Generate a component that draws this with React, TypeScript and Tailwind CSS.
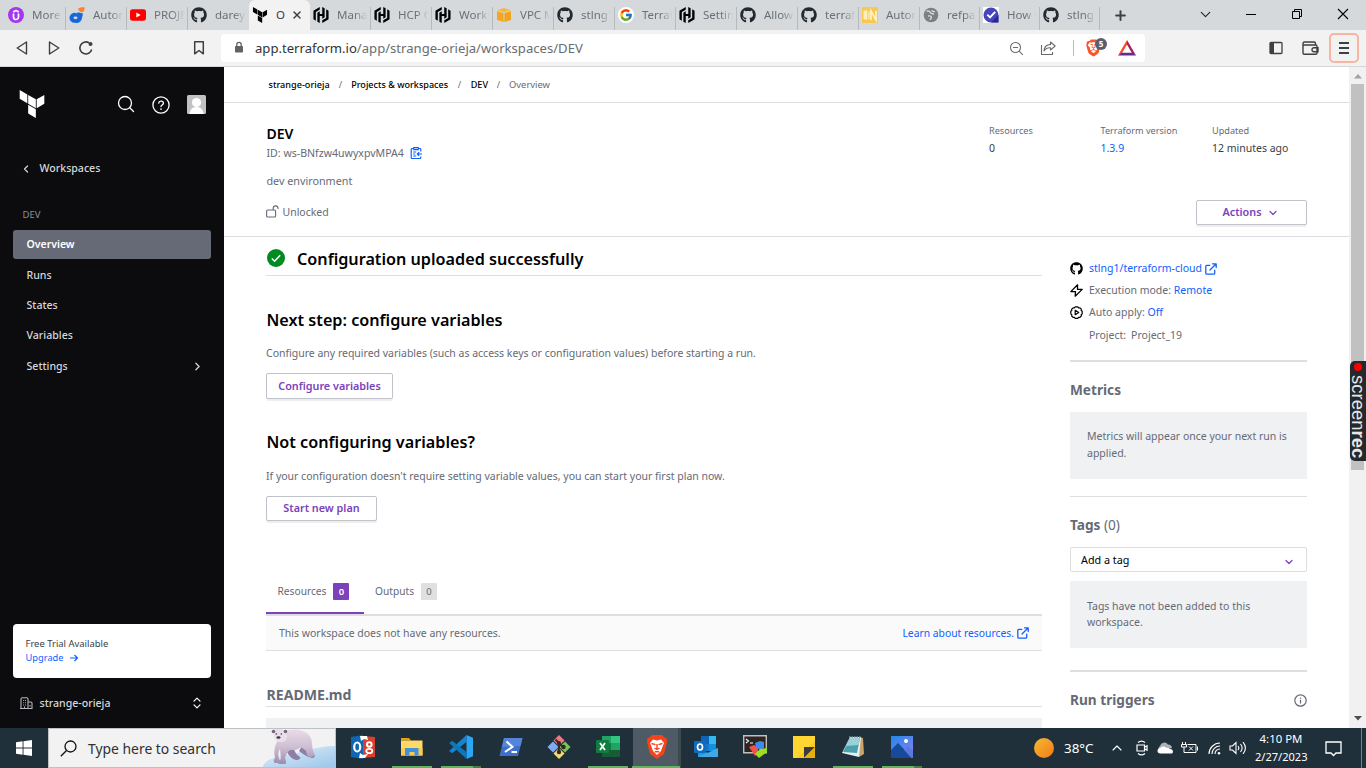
import type { ReactNode } from "react";
import { FaGithub } from "react-icons/fa";
import { SiBrave, SiHashicorp } from "react-icons/si";
import { FcGoogle } from "react-icons/fc";
import { ChevronDown, ChevronLeft, ChevronRight, ChevronUp, Plus, X } from "lucide-react";

const TERRAFORM =
  "M1.44 0v7.575l6.561 3.79V3.787zm21.12 4.227l-6.561 3.791v7.574l6.56-3.787zM8.72 4.23v7.575l6.561 3.787V8.018zm0 8.405v7.575L15.28 24v-7.578z";

function Terraform({ className }: { className: string }) {
  return (
    <svg viewBox="0 0 24 24" className={className} fill="currentColor">
      <path d={TERRAFORM} />
    </svg>
  );
}

/* ---------- Favicons ---------- */

function Udemy() {
  return (
    <svg viewBox="0 0 16 16" className="size-4">
      <circle cx="8" cy="8" r="8" fill="#a435f0" />
      <path d="M5.200 5 8 3.400 10.800 5M5.500 6.500V10a2.500 2.500 0 0 0 5 0V6.500" fill="none" stroke="#fff" strokeWidth="1.700" />
    </svg>
  );
}

function Dribble() {
  return (
    <svg viewBox="0 0 16 16" className="size-4">
      <path d="M8.500 5.200 14 6.500 12.800 12a6 6 0 0 1-6.800 3.800A5 5 0 1 1 8 6.500z" fill="#1868db" />
      <ellipse cx="6.500" cy="10.800" rx="2" ry="1.400" fill="#d5d9dc" />
      <path d="M9.200 1.500C11 .2 15.400 0 15.600.6c.3 1-.4 4.200-2.200 4.700-1.500.4-5-2.600-4.200-3.800z" fill="#ff8228" />
    </svg>
  );
}

function YouTube() {
  return (
    <svg viewBox="0 0 16 16" className="size-4">
      <rect x="0" y="2.300" width="16" height="11.400" rx="2.600" fill="#f00" />
      <path d="M6.300 5.500v5L10.700 8z" fill="#fff" />
    </svg>
  );
}

function AwsBox() {
  return (
    <svg viewBox="0 0 16 16" className="size-4">
      <path d="M8 1 15 3.200 8 5.300 1 3.200z" fill="#f6b73c" />
      <path d="M1 4.200 7.600 6v9L1 13z" fill="#f5a623" />
      <path d="M15 4.200 8.400 6v9l6.600-2z" fill="#f0a41c" />
    </svg>
  );
}

function NoteIcon() {
  return (
    <svg viewBox="0 0 16 16" className="size-4">
      <rect width="16" height="16" fill="#f9c94f" />
      <path d="M1.500 4 5 3v10l-3.500-1z" fill="#fdeebc" />
      <path d="M5.500 4.500 8 4v8.500l-2.500-.4z" fill="#fbe08f" />
      <path d="M9 13V4l5 9V4" fill="none" stroke="#fff7dc" strokeWidth="1.500" />
    </svg>
  );
}

function Globe() {
  return (
    <svg viewBox="0 0 16 16" className="size-4">
      <circle cx="8" cy="8" r="7.300" fill="#7d8083" />
      <path d="M3.500 4.200c2-.4 3.500.2 4 1.500.4 1.200 2 .8 3.500 1.300M5 9c2-.3 3.500.3 3.400 1.500-.1.900-1 1-1.200 2.300M9 3c0 1.300 1.500 1.800 3 1.600" fill="none" stroke="#d5d9dc" strokeWidth="1.400" />
    </svg>
  );
}

function CheckSeal() {
  return (
    <svg viewBox="0 0 16 16" className="size-4">
      <rect width="16" height="16" fill="#fff" />
      <path d="M8 .5a7.500 7.500 0 0 1 7.500 7.500v7.500H8A7.500 7.500 0 0 1 8 .5z" fill="#4644bd" />
      <path d="M15.500 8v7.500H8z" fill="#29278f" />
      <path d="m4.300 7.600 2.700 2.800 5.200-5.600" fill="none" stroke="#fff" strokeWidth="1.900" />
    </svg>
  );
}

const gh = <FaGithub className="size-4 text-[#24292f]" />;
const hc = <SiHashicorp className="size-4 text-black" />;

const tabs: { title: string; icon: ReactNode; active?: boolean; edge?: boolean }[] = [
  { title: "More", icon: <Udemy /> },
  { title: "Autom", icon: <Dribble /> },
  { title: "PROJE", icon: <YouTube /> },
  { title: "darey", icon: gh, edge: true },
  { title: "O", icon: <Terraform className="size-4 text-black" />, active: true },
  { title: "Mana", icon: hc },
  { title: "HCP C", icon: hc },
  { title: "Works", icon: hc },
  { title: "VPC M", icon: <AwsBox /> },
  { title: "stlng1", icon: gh },
  {
    title: "Terraf",
    icon: (
      <span className="flex size-4 items-center justify-center rounded-full bg-white">
        <FcGoogle className="size-[14px]" />
      </span>
    ),
  },
  { title: "Settin", icon: hc },
  { title: "Allow", icon: gh },
  { title: "terraf", icon: gh },
  { title: "Autom", icon: <NoteIcon /> },
  { title: "refpa", icon: <Globe /> },
  { title: "How t", icon: <CheckSeal /> },
  { title: "stlng1", icon: gh },
];

function TabStrip() {
  return (
    <div className="flex h-[30px] bg-[#d5d9dc] pl-[5px]">
      {tabs.map((t, i) => (
        <div
          key={i}
          className={`flex h-full shrink-0 items-center pl-[3px] ${i < 15 ? "w-[61px]" : "w-[60px]"} ${t.active ? "rounded-t-md bg-[#f2f2f2]" : ""}`}
        >
          <span className="flex size-4 shrink-0 items-center">{t.icon}</span>
          {t.active ? (
            <>
              <span className="ml-2 text-[11.500px] text-[#3c4043]">O</span>
              <X className="ml-[6px] size-3 text-[#3c4043]" strokeWidth={3} />
            </>
          ) : (
            <span className="ml-2 flex-1 overflow-hidden text-[11.500px] whitespace-nowrap text-[#6b7075] [mask-image:linear-gradient(to_right,black_55%,transparent_92%)]">
              {t.title}
            </span>
          )}
          {!t.active && !t.edge && <span className="mt-[7px] h-[23px] w-px shrink-0 bg-[#b7babd]" />}
        </div>
      ))}
      <div className="flex w-[41px] items-center justify-center">
        <Plus className="size-[15px] text-[#3c4043]" strokeWidth={3.200} />
      </div>
      <div className="flex flex-1 items-center justify-end text-black">
        <ChevronDown className="mt-[-2px] mr-[31px] size-[17px] text-[#222]" strokeWidth={1.600} />
        <svg viewBox="0 0 12 12" className="mt-[-2px] mr-[34px] size-3" fill="none" stroke="currentColor">
          <path d="M1 6.500h10" />
        </svg>
        <svg viewBox="0 0 12 12" className="mt-[-2px] mr-[34px] size-3" fill="none" stroke="currentColor">
          <path d="M1.500 3.500h7v7h-7zM3.500 3.500v-2h7v7h-2" />
        </svg>
        <svg viewBox="0 0 12 12" className="mt-[-2px] mr-[17px] size-3" fill="none" stroke="currentColor" strokeWidth="1.100">
          <path d="m1 1 10 10M11 1 1 11" />
        </svg>
      </div>
    </div>
  );
}

function Toolbar() {
  return (
    <div className="flex h-9 items-center bg-[#f2f2f2] text-[#3c4043]">
      <svg viewBox="0 0 12 16" className="ml-4 h-4 w-3" fill="none" stroke="currentColor" strokeWidth="1.400" strokeLinejoin="round">
        <path d="M10.500 2v12L1.200 8z" />
      </svg>
      <svg viewBox="0 0 12 16" className="ml-5 h-4 w-3" fill="none" stroke="currentColor" strokeWidth="1.400" strokeLinejoin="round">
        <path d="M1.500 2v12l9.300-6z" />
      </svg>
      <svg viewBox="0 0 16 16" className="ml-[18px] size-4" fill="none" stroke="currentColor" strokeWidth="1.600">
        <path d="M13.700 9.500A6 6 0 1 1 11 2.800" />
        <circle cx="12.500" cy="4" r="2" fill="currentColor" stroke="none" />
      </svg>
      <svg viewBox="0 0 12 16" className="ml-[99px] h-4 w-3" fill="none" stroke="currentColor" strokeWidth="1.500" strokeLinejoin="round">
        <path d="M1.700 1.800h8.600v12L6 10.500l-4.300 3.300z" />
      </svg>
      <div className="ml-4 flex h-7 w-[924px] items-center rounded bg-white">
        <svg viewBox="0 0 10 13" className="mt-[-1px] ml-[13px] h-[13px] w-[10px]">
          <rect x="1" y="5" width="8" height="6.500" rx=".8" fill="#5f6368" />
          <path d="M2.800 5.500V3.600a2.200 2.200 0 0 1 4.400 0v1.900" fill="none" stroke="#5f6368" strokeWidth="1.300" />
        </svg>
        <div className="mt-[1px] ml-[11px] text-[13.100px] whitespace-nowrap text-[#6a6d70]">
          <span className="text-[#2f3336]">app.terraform.io</span>/app/strange-orieja/workspaces/DEV
        </div>
        <div className="ml-auto flex items-center">
          <svg viewBox="0 0 15 15" className="size-[15px]" fill="none" stroke="#6a6d70" strokeWidth="1.100">
            <circle cx="6.500" cy="6.500" r="5" />
            <path d="m10.200 10.200 3.600 3.600M4 6.500h5" />
          </svg>
          <svg viewBox="0 0 16 16" className="ml-4 size-4" fill="none" stroke="#6a6d70" strokeWidth="1.100" strokeLinejoin="round">
            <path d="M1.500 5v9.500h11V12M10.500 2l4.700 4-4.700 4V7.800C7.500 7.600 5.500 8.600 4 11c.2-3.500 2.500-6.300 6.500-6.600z" />
          </svg>
          <span className="ml-[17px] h-4 w-px bg-[#b9bbbd]" />
          <div className="relative ml-[11px] h-5 w-6">
            <SiBrave className="absolute top-[1px] left-0 h-[18px] w-[17px] text-[#fb542b]" />
            <span className="absolute top-0 left-[10px] flex size-3 items-center justify-center rounded-full bg-[#5b5e6b] text-[8px] font-bold text-white">
              5
            </span>
          </div>
          <svg viewBox="0 0 18 16" className="mr-[9px] ml-[9px] h-4 w-[18px]">
            <path d="M9 0 0 15.500l3.800-2L9 4.600z" fill="#ff4724" />
            <path d="m9 0 9 15.500-3.800-2L9 4.600z" fill="#9e1f63" />
            <path d="M0 15.500h18l-3.800-2.700H3.800z" fill="#662d91" />
          </svg>
        </div>
      </div>
      <svg viewBox="0 0 14 14" className="ml-[124px] size-[14px]">
        <rect x="1" y="1.500" width="12" height="11" rx="1" fill="none" stroke="currentColor" strokeWidth="1.300" />
        <path d="M1 1.500h4v11H1z" fill="currentColor" />
      </svg>
      <svg viewBox="0 0 17 14" className="ml-[19px] h-[14px] w-[17px]" fill="none" stroke="currentColor" strokeWidth="1.400">
        <path d="M2.500 4h11a1.500 1.500 0 0 1 1.500 1.500V12a1.300 1.300 0 0 1-1.300 1.300H2.300A1.300 1.300 0 0 1 1 12V2.500A1.500 1.500 0 0 1 2.500 1H12a1.500 1.500 0 0 1 1.500 1.500V4M1 3c0 .7.700 1 1.500 1M16 6.800h-4.500a2 2 0 0 0 0 3.900H16z" />
      </svg>
      <div className="ml-[10px] flex h-[30px] w-[30px] items-center justify-center rounded-[5px] border-2 border-[#f5b5a0]">
        <svg viewBox="0 0 10 12" className="h-3 w-[10px]" fill="none" stroke="currentColor" strokeWidth="2">
          <path d="M0 1h10M0 6h10M0 11h10" />
        </svg>
      </div>
    </div>
  );
}

/* ---------- Sidebar ---------- */

const nav = ["Runs", "States", "Variables"];

function Sidebar() {
  return (
    <aside className="flex w-[224px] shrink-0 flex-col bg-[#0c0c0e] pt-[23px] text-[#d5d7db]">
      <div className="flex h-7 items-center text-white">
        <Terraform className="ml-[18px] size-7" />
        <svg viewBox="0 0 18 18" className="ml-[71px] size-[18px]" fill="none" stroke="currentColor" strokeWidth="1.300" strokeLinecap="round">
          <circle cx="8" cy="8" r="6.500" />
          <path d="m12.800 12.800 3.700 3.700" />
        </svg>
        <svg viewBox="0 0 18 18" className="mt-[1px] ml-[17px] size-[18px]" fill="none" stroke="currentColor" strokeWidth="1.300" strokeLinecap="round">
          <circle cx="9" cy="9" r="8.100" />
          <path d="M6.700 7.200A2.300 2.300 0 0 1 9 5.200c1.400 0 2.400.9 2.400 2.100C11.400 9 9 9 9 10.500" />
          <path d="M9 13v.1" strokeWidth="1.700" />
        </svg>
        <svg viewBox="0 0 19 19" className="mt-[1px] ml-[17px] size-[19px]">
          <rect width="19" height="19" rx="1.500" fill="#c2c2c2" />
          <circle cx="9.500" cy="7.500" r="4.600" fill="#fff" />
          <path d="M2.500 19c.3-4.200 2.500-7 7-7s6.700 2.800 7 7z" fill="#fff" />
        </svg>
      </div>
      <div className="mt-[41px] flex h-5 items-center text-[10.600px] font-medium text-[#d5d7db]">
        <ChevronLeft className="ml-[20px] size-3" strokeWidth={2.400} />
        <span className="ml-[7.500px]">Workspaces</span>
      </div>
      <div className="mt-7 flex h-4 items-center pl-[22.500px] text-[9.500px] text-[#8c909c]">DEV</div>
      <div className="mx-[13px] mt-[7px] flex h-[29px] items-center rounded-[3px] bg-[#656a76] pl-[13.500px] text-[10.500px] font-semibold text-white">
        Overview
      </div>
      <div className="mt-[2px] text-[10.600px] font-medium">
        {nav.map((n) => (
          <div key={n} className="flex h-[30px] items-center pl-[26.500px]">
            {n}
          </div>
        ))}
        <div className="flex h-[31px] items-center justify-between pr-5 pl-[26.500px]">
          Settings
          <ChevronRight className="mt-[-1px] size-[13px]" strokeWidth={2.300} />
        </div>
      </div>
      <div className="mx-[13px] mt-auto h-[54px] rounded bg-white pt-[13px] pl-[12.500px] leading-[14px]">
        <div className="text-[9.450px] text-[#3b3d45]">Free Trial Available</div>
        <div className="flex items-center text-[9.300px] text-[#1060ff]">
          Upgrade
          <svg viewBox="0 0 10 10" className="mt-[-1px] ml-[5px] size-[10px]" fill="none" stroke="currentColor" strokeWidth="1.200">
            <path d="M1 5h7.500M5.500 2l3 3-3 3" />
          </svg>
        </div>
      </div>
      <div className="flex h-[50px] items-center text-[10.600px] font-medium">
        <svg viewBox="0 0 13 12" className="ml-5 h-3 w-[13px]" fill="none" stroke="#b2b6bd" strokeWidth="1.100">
          <path d="M1 11.500V2A1.200 1.200 0 0 1 2.200.8h4.600A1.200 1.200 0 0 1 8 2v9.500M8 5h2.800A1.200 1.200 0 0 1 12 6.200v5.300H0M3.200 3.500h.9M5 3.500h.9M3.200 5.700h.9M5 5.700h.9M3.200 8h.9M5 8h.9M4.500 11.500v-2M10 8v1.500" />
        </svg>
        <span className="mt-[1px] ml-[6.500px]">strange-orieja</span>
        <svg viewBox="0 0 8 12" className="mr-[23px] ml-auto h-3 w-2" fill="none" stroke="#fff" strokeWidth="1.200" strokeLinejoin="round" strokeLinecap="round">
          <path d="M1 4.200 4 1.200l3 3M1 7.800l3 3 3-3" />
        </svg>
      </div>
    </aside>
  );
}

/* ---------- Workspace page ---------- */

function Stat({ label, value, link, className }: { label: string; value: string; link?: boolean; className: string }) {
  return (
    <div className={`shrink-0 ${className}`}>
      <div className="h-[14px] text-[9.150px] leading-[14px] text-[#656a76]">{label}</div>
      <div className={`mt-[2px] h-4 text-[10.500px] leading-4 ${link ? "text-[#1060ff]" : "text-[#3b3d45]"}`}>{value}</div>
    </div>
  );
}

function ExternalIcon() {
  return (
    <svg viewBox="0 0 12 12" className="mt-[-1px] size-3 shrink-0" fill="none" stroke="#1060ff" strokeWidth="1.300" strokeLinecap="round" strokeLinejoin="round">
      <path d="M9.700 7.200v3a1 1 0 0 1-1 1H1.800a1 1 0 0 1-1-1V3.300a1 1 0 0 1 1-1h3M7.500.8h3.700v3.700M11 1 5 7" />
    </svg>
  );
}

const button =
  "flex items-center justify-center rounded-[2px] border border-[#c0c3ca] bg-white text-[10.800px] font-semibold text-[#7b42bc] shadow-[0_2px_1px_rgba(0,0,0,0.07)]";

function PageHeader() {
  return (
    <header className="flex h-[134px] border-b border-[#dcdee2] pl-[42px]">
      <div className="pt-[21px]">
        <h1 className="h-5 pl-[0.500px] text-[14px] leading-5 font-semibold text-black">DEV</h1>
        <div className="mt-[1px] flex h-[18px] items-center pl-[0.500px] text-[10.580px] text-[#656a76]">
          ID: ws-BNfzw4uwyxpvMPA4
          <svg viewBox="0 0 12 12" className="mt-[-2px] ml-[6.500px] size-3" fill="none" stroke="#1060ff" strokeWidth="1.200">
            <path d="M10.800 4.500V2.500a1 1 0 0 0-1-1H8.500M3.500 1.500H2.200a1 1 0 0 0-1 1v8a1 1 0 0 0 1 1h7.600a1 1 0 0 0 1-1V9.500M3.800.6h4.400v2H3.800zM3.200 5h3M3.200 7h2M3.200 9h3M12 7H7.500M9.200 5.200 7.300 7l1.900 1.800" />
          </svg>
        </div>
        <div className="mt-[10px] h-4 pl-[0.500px] text-[10.780px] leading-4 text-[#656a76]">dev environment</div>
        <div className="mt-[16px] flex h-4 items-center text-[10.500px] text-[#656a76]">
          <svg viewBox="0 0 13 13" className="mt-[-4px] size-[13px]" fill="none" stroke="currentColor" strokeWidth="1.100">
            <rect x=".6" y="5" width="9" height="7" rx="1" />
            <path d="M7.200 5V3.300a2.400 2.400 0 0 1 4.800 0v.8" />
          </svg>
          <span className="ml-[3.500px]">Unlocked</span>
        </div>
      </div>
      <div className="mr-[42px] ml-auto flex flex-col items-end pt-[21px]">
        <div className="flex">
          <Stat label="Resources" value="0" className="w-[111.500px]" />
          <Stat label="Terraform version" value="1.3.9" link className="w-[111.500px]" />
          <Stat label="Updated" value="12 minutes ago" className="w-[95px]" />
        </div>
        <button className={`${button} mt-[44px] h-[25px] w-[111px] pr-[2px]`}>
          Actions
          <ChevronDown className="ml-[5px] size-3" strokeWidth={2.400} />
        </button>
      </div>
    </header>
  );
}

function MainColumn() {
  return (
    <div className="flex w-[776px] flex-col text-[10.490px] text-[#656a76]">
      <div className="flex h-[39px] shrink-0 items-center border-b border-[#dcdee2] pt-[7px]">
        <svg viewBox="0 0 18 18" className="mt-[-3px] ml-[1px] size-[18px]">
          <circle cx="9" cy="9" r="9" fill="#008a22" />
          <path d="m4.800 9.500 2.800 2.700 5.600-6" fill="none" stroke="#fff" strokeWidth="1.500" />
        </svg>
        <h2 className="ml-3 text-[16.200px] font-semibold text-black">Configuration uploaded successfully</h2>
      </div>
      <h2 className="mt-8 h-6 pl-[0.500px] text-[16.200px] leading-6 font-semibold text-black">Next step: configure variables</h2>
      <p className="mt-[13px] h-4 leading-4">
        Configure any required variables (such as access keys or configuration values) before starting a run.
      </p>
      <button className={`${button} mt-3 h-[26px] w-[127px] shrink-0`}>Configure variables</button>
      <h2 className="mt-[31px] h-6 pl-[0.500px] text-[16.200px] leading-6 font-semibold text-black">Not configuring variables?</h2>
      <p className="mt-[14px] h-4 leading-4">
        If your configuration doesn't require setting variable values, you can start your first plan now.
      </p>
      <button className={`${button} mt-3 h-[25px] w-[111px] shrink-0`}>Start new plan</button>
      <div className="mt-12 flex h-[45px] shrink-0 text-[10.200px]">
        <div className="flex w-[98px] items-center border-b-2 border-[#7b42bc] pt-[2px] pl-[11.500px]">
          Resources
          <span className="ml-[7px] flex h-[17px] w-4 items-center justify-center rounded-[1px] bg-[#7b42bc] pt-[2px] text-[9.500px] font-semibold text-white">0</span>
        </div>
        <div className="flex items-center pl-[11px]">
          Outputs
          <span className="ml-[7px] flex h-[17px] w-4 items-center justify-center rounded-[1px] bg-[#e0e0e0] pt-[2px] text-[9.500px]">0</span>
        </div>
      </div>
      <div className="flex h-[37px] shrink-0 items-center justify-between border-t-2 border-b border-[#dcdee2] bg-[#fafafa] pt-[1px] pr-[13px] pl-[13px]">
        <span>This workspace does not have any resources.</span>
        <span className="flex items-center gap-[3px] text-[10.330px] text-[#1060ff]">
          Learn about resources.
          <ExternalIcon />
        </span>
      </div>
      <h2 className="mt-[34px] h-[22px] shrink-0 border-b border-[#dcdee2] pl-[0.500px] text-[14.100px] leading-5 font-bold">README.md</h2>
      <div className="mt-[11px] flex-1 bg-[#f0f1f3]" />
    </div>
  );
}

function RightColumn() {
  return (
    <div className="ml-7 w-[237px] pt-[21px] text-[10.500px] text-[#656a76]">
      <div className="flex h-[22px] items-center text-[#1060ff]">
        <FaGithub className="mt-[-1px] size-[13px] text-black" />
        <span className="mr-[2.500px] ml-[6px]">stlng1/terraform-cloud</span>
        <ExternalIcon />
      </div>
      <div className="flex h-[22px] items-center">
        <svg viewBox="0 0 13 13" className="mt-[-2px] size-[13px]" fill="none" stroke="#000" strokeWidth="1.300" strokeLinejoin="round">
          <path d="M7.600.8.800 7.600h4.700L5.200 12.200l7-6.800H7.500z" />
        </svg>
        <span className="ml-[6px]">
          Execution mode: <span className="text-[#1060ff]">Remote</span>
        </span>
      </div>
      <div className="flex h-[22px] items-center">
        <svg viewBox="0 0 13 13" className="mt-[-2px] size-[13px]" fill="none" stroke="#000" strokeWidth="1.200" strokeLinejoin="round">
          <path d="M5.200.9h2.600l.8 1 1.300-.1 1.400 1.400-.1 1.300 1 .8v2.600l-1 .8.1 1.300-1.400 1.400-1.300-.1-.8 1H5.200l-.8-1-1.300.1L1.700 10l.1-1.300-1-.8V5.300l1-.8-.1-1.300 1.400-1.400 1.300.1z" />
          <path d="M5.200 4.300v4.400L8.700 6.500z" />
        </svg>
        <span className="ml-[6px]">
          Auto apply: <span className="text-[#1060ff]">Off</span>
        </span>
      </div>
      <div className="flex h-6 items-center pl-[19px]">
        Project:<span className="ml-[5px]">Project_19</span>
      </div>
      <h3 className="mt-[12px] h-10 border-t-2 border-[#dcdee2] pt-[18px] text-[13.650px] leading-5 font-bold">Metrics</h3>
      <div className="mt-3 h-[67px] bg-[#f0f1f3] px-[17px] pt-4 leading-[17px]">
        Metrics will appear once your next run is
        <br />
        applied.
      </div>
      <h3 className="mt-[17px] h-[39px] border-t border-[#dcdee2] pt-[18px] text-[13.650px] leading-5 font-bold">
        Tags <span className="font-normal">(0)</span>
      </h3>
      <div className="mt-3 flex h-[25px] items-center justify-between rounded-[2px] border border-[#dcdee2] pt-[1px] pr-[11px] pl-[10px] text-[10.800px] text-black">
        Add a tag
        <ChevronDown className="mt-[3px] size-3 text-[#7b42bc]" strokeWidth={2.600} />
      </div>
      <div className="mt-[9px] h-[67px] bg-[#f0f1f3] px-[17px] pt-[17px] leading-4">
        Tags have not been added to this
        <br />
        workspace.
      </div>
      <div className="mt-[22px] flex h-10 items-center justify-between border-t-2 border-[#dcdee2] pt-[18px]">
        <h3 className="text-[13.650px] leading-5 font-bold">Run triggers</h3>
        <svg viewBox="0 0 13 13" className="size-[13px]" fill="none" stroke="currentColor" strokeWidth="1.200">
          <circle cx="6.500" cy="6.500" r="5.700" />
          <path d="M6.500 5.800v3.700M6.500 3.500v1.200" />
        </svg>
      </div>
    </div>
  );
}

function Scrollbar() {
  return (
    <div className="relative flex w-[17px] shrink-0 flex-col items-center bg-[#f1f1f1]">
      <svg viewBox="0 0 8 5" className="mt-[7px] h-[5px] w-2" fill="#a3a3a3">
        <path d="M4 0 8 4.500H0z" />
      </svg>
      <div className="mt-[5px] h-[386px] w-[13px] bg-[#c1c1c1]" />
      <svg viewBox="0 0 8 5" className="mt-auto mb-[7px] h-[5px] w-2" fill="#505050">
        <path d="M0 0h8L4 4.500z" />
      </svg>
      <div className="absolute top-[294px] right-0 flex h-[100px] w-4 flex-col items-center rounded-l-[5px] bg-[#25282d]">
        <span className="mt-[2px] size-2 shrink-0 rounded-full bg-[#f00]" />
        <span className="mt-[4px] font-['Liberation_Sans'] text-[18.500px] leading-4 text-[#e8e8e8] [writing-mode:vertical-rl]">
          screen<b>rec</b>
        </span>
      </div>
    </div>
  );
}

/* ---------- Taskbar ---------- */

function PolarBear() {
  return (
    <svg viewBox="0 0 72 38" className="h-[38px] w-[72px]">
      <defs>
        <linearGradient id="ice" x1="0" y1="0" x2="1" y2="1">
          <stop offset="0" stopColor="#e3f0fa" />
          <stop offset="1" stopColor="#9cc6ea" />
        </linearGradient>
        <linearGradient id="fur" x1="0" y1="0" x2="0" y2="1">
          <stop offset="0" stopColor="#e9dbe8" />
          <stop offset=".5" stopColor="#cfbfd3" />
          <stop offset="1" stopColor="#9c8cae" />
        </linearGradient>
      </defs>
      <path d="M0 38c1-5 6-8 14-10 10-3 20-3 30-7 10-2 18-4 28-4v21z" fill="url(#ice)" />
      <path d="M39 17c5 1 8 6 12 8 2 2 0 4-2 4-5-1-9-4-13-7z" fill="#8f7fa6" />
      <path d="M22 17h8c2 5 2 8 7 11 1 2-1 3-4 3-4-1-7-4-9-8z" fill="#8f7fa6" />
      <path d="M14 11 22 3c4-3 12-3 18-1 7 3 9 8 9 13l1 7c3 4 1 6-3 6-3 0-3-3-4-6l-5-4c-3 3-7 3-11 3-3 2-4 5-5 8 1 3 2 5 0 6h-6c-2-1 0-4 2-5l-1-10c-2 3-2 6-1 10 1 2 1 4-1 4h-3c-2-1-1-4 0-5-1-6-1-11 2-16z" fill="url(#fur)" />
      <path d="M11 1c4-2 9-1 11 1 2 3 3 5 1 9-3 3-8 3-10 0-2-3-3-7-2-10z" fill="#e9deea" />
      <circle cx="10.500" cy="2.500" r="1.800" fill="#75667d" />
      <circle cx="22.500" cy="2.500" r="1.800" fill="#75667d" />
      <ellipse cx="15.500" cy="8.500" rx="2" ry="1.300" fill="#3b3444" />
      <circle cx="13.300" cy="5" r=".8" fill="#3b3444" />
      <circle cx="18.300" cy="5" r=".8" fill="#3b3444" />
    </svg>
  );
}

function OldOffice() {
  return (
    <svg viewBox="0 0 24 24" className="size-6">
      <path d="M0 2 12 0v24L0 22z" fill="#0f66b3" />
      <path d="m12 1 12 1v20l-12 1z" fill="#d8402f" />
      <path d="M9 1h7l1 4-4-1-3 2zM8 23h6l3-4-5 1-3-2z" fill="#fff" />
      <ellipse cx="6.200" cy="12" rx="3" ry="4.500" fill="none" stroke="#fff" strokeWidth="2.200" />
      <circle cx="18.300" cy="9.500" r="2.300" fill="none" stroke="#fff" strokeWidth="2" />
      <ellipse cx="18.300" cy="16" rx="3" ry="2.200" fill="none" stroke="#fff" strokeWidth="1.800" />
    </svg>
  );
}

function Explorer() {
  return (
    <svg viewBox="0 0 24 24" className="size-6">
      <path d="M1 3h8l2 2.500H1z" fill="#e8a20c" />
      <path d="M1 5.500h21.500v15H1z" fill="#ffd867" />
      <path d="M1 13h21.500v7.500H1z" fill="#fbcb50" />
      <path d="M5 13h13.500v7.500h-4V17h-5v3.500H5z" fill="#3f93dc" />
    </svg>
  );
}

function VSCode() {
  return (
    <svg viewBox="0 0 24 24" className="size-6">
      <path d="m17.500 0 6.500 2.700v18.600L17.500 24z" fill="#2aa6f2" />
      <path d="m17.500 0 .5 6.500L3.200 18.200.2 16z" fill="#1583cf" />
      <path d="m17.500 24 .5-6.500L3.200 5.800.2 8z" fill="#0d77bd" />
    </svg>
  );
}

function PowerShell() {
  return (
    <svg viewBox="0 0 24 24" className="size-6">
      <path d="M5 3h18.500l-4.500 18H.5z" fill="#3f6fc9" />
      <path d="M5 3h18.500l-2 8L3 12z" fill="#5585da" />
      <path d="m7.500 6.500 6 5.300L6 17M12.500 17H18" fill="none" stroke="#fff" strokeWidth="2" />
    </svg>
  );
}

function GitBash() {
  return (
    <svg viewBox="0 0 24 24" className="size-6">
      <path d="m12 0 5.500 5.500L12 11 6.500 5.500z" fill="#ee7a80" />
      <path d="m6 6.500 5.500 5.500L6 17.500.500 12z" fill="#7faaf5" />
      <path d="m18 6.500 5.500 5.500-5.500 5.500-5.500-5.500z" fill="#7cc25a" />
      <path d="m12 13 5.500 5.500L12 24l-5.500-5.500z" fill="#f5da71" />
      <path d="m8.500 4.500 7 7M12 8v10" stroke="#2e2a28" strokeWidth="1.800" />
      <circle cx="12" cy="8" r="2" fill="#2e2a28" />
      <circle cx="16.500" cy="12" r="2.200" fill="#2e2a28" />
      <circle cx="12" cy="17" r="2.200" fill="#2e2a28" />
    </svg>
  );
}

function Excel() {
  return (
    <svg viewBox="0 0 24 24" className="size-6">
      <path d="M6 1h9v7H6z" fill="#21a366" />
      <path d="M15 1h9v7h-9z" fill="#33c481" />
      <path d="M6 8h9v7H6z" fill="#107c41" />
      <path d="M15 8h9v7h-9z" fill="#21a366" />
      <path d="M6 15h18v7H6z" fill="#185c37" />
      <rect y="5" width="13" height="13" rx="1" fill="#107c41" />
      <path d="m4 8 5 7M9 8l-5 7" stroke="#fff" strokeWidth="1.800" />
    </svg>
  );
}

function BraveLion() {
  return (
    <svg viewBox="0 0 24 24" className="size-6">
      <path d="M7 0h10l2.500 2.500 2 .5.500 4-3 12-7 5-7-5L2 7l.5-4 2-.5z" fill="#f5431c" />
      <path d="m8 4.500 4 1 4-1 3 3.500-2 5-1 3-4 4-4-4-1-3-2-5z" fill="#fff" />
      <path d="m6.500 8.500 4 1.200M17.500 8.500l-4 1.200M9.500 13l2.500 1.500 2.500-1.500M12 9v6M9.800 16.800h4.400" fill="none" stroke="#f5431c" strokeWidth="1.400" />
    </svg>
  );
}

function Outlook() {
  return (
    <svg viewBox="0 0 24 24" className="size-6">
      <path d="M7 1h8v8H7z" fill="#0f64b8" />
      <path d="M15 1h7v8h-7z" fill="#35b8f1" />
      <path d="M7 9h8v7H7z" fill="#1378cc" />
      <path d="M15 9h7v7h-7z" fill="#1490df" />
      <path d="m4 13 10 5 10-5v9H4z" fill="#2397e0" />
      <path d="m4 22 20-9v9z" fill="#5abcf0" opacity=".5" />
      <rect y="6" width="12" height="12" rx="1" fill="#0f6cbd" />
      <ellipse cx="6" cy="12" rx="2.500" ry="3" fill="none" stroke="#fff" strokeWidth="1.700" />
    </svg>
  );
}

function Terminal() {
  return (
    <svg viewBox="0 0 24 24" className="size-6">
      <path d="M.7.700h22.600v17H.7z" fill="#2b2523" stroke="#c3bfbc" strokeWidth="1.400" />
      <path d="m3 4 2.500 2L3 8M7 8h3" fill="none" stroke="#fff" strokeWidth="1.100" />
      <path d="m6 12 5-2 4 2v6l-3 3z" fill="#f4504b" />
      <path d="m12 8 5-2 4 1v6l-4 2-4-3z" fill="#3d8bf0" />
      <path d="m12 19 5-5 7-1v4l-8 6z" fill="#9be01c" />
    </svg>
  );
}

function StickyNotes() {
  return (
    <svg viewBox="0 0 24 24" className="size-6">
      <path d="M1 1h22v22H1z" fill="#fbc918" />
      <path d="M1 1h22v5L5 23H1z" fill="#fed531" />
      <path d="M12 23V12h11z" fill="#3b3b3b" />
      <path d="m12 23 11-11v11z" fill="#e8ae0a" />
    </svg>
  );
}

function Notepad() {
  return (
    <svg viewBox="0 0 24 24" className="size-6">
      <path d="m18 2 4 1 1 16-5 3z" fill="#c9a36b" />
      <path d="M9 2h11l-2 20-17-4z" fill="#e4eff2" />
      <path d="M9 3h10l-3 15L2 17z" fill="#4ba1ac" />
      <path d="M9 3h10l-1.500 7L5 11z" fill="#9bd0d6" />
      <path d="M8 2h12" stroke="#838d92" strokeWidth="1.600" strokeDasharray="1.500 1" />
    </svg>
  );
}

function Photos() {
  return (
    <svg viewBox="0 0 24 24" className="size-6">
      <defs>
        <linearGradient id="sky" x1="0" y1="0" x2="1" y2="1">
          <stop offset="0" stopColor="#2387e8" />
          <stop offset="1" stopColor="#8b82ef" />
        </linearGradient>
      </defs>
      <path d="M1 1h22v22H1z" fill="url(#sky)" />
      <path d="M1 15 8 8l14.500 15H1z" fill="#184a9c" />
      <path d="m14 15 4-4 5 5v7h-1.500z" fill="#5a78df" />
      <circle cx="16" cy="6" r="2" fill="#fff" />
    </svg>
  );
}

const apps: { icon: ReactNode; width: string; bar?: string; stacked?: boolean; active?: boolean }[] = [
  { icon: <OldOffice />, width: "w-12" },
  { icon: <Explorer />, width: "w-[49px]", bar: "w-10" },
  { icon: <VSCode />, width: "w-[50px]", bar: "w-10", stacked: true },
  { icon: <PowerShell />, width: "w-[49px]" },
  { icon: <GitBash />, width: "w-[48px]" },
  { icon: <Excel />, width: "w-[50px]", bar: "w-10" },
  { icon: <BraveLion />, width: "w-[48px]", bar: "w-12", active: true },
  { icon: <Outlook />, width: "w-[49px]" },
  { icon: <Terminal />, width: "w-[49px]" },
  { icon: <StickyNotes />, width: "w-[49px]" },
  { icon: <Notepad />, width: "w-[49px]", bar: "w-10" },
  { icon: <Photos />, width: "w-[50px]", bar: "w-10", stacked: true },
];

function Taskbar() {
  return (
    <footer className="flex h-10 shrink-0 bg-[#20303b] text-white">
      <div className="flex w-12 items-center justify-center">
        <svg viewBox="0 0 16 16" className="size-4" fill="#fff">
          <path d="M0 2.300 6.600 1.300v6.200H0zM7.500 1.200 16 0v7.500H7.500zM0 8.400h6.600v6.300L0 13.700zM7.500 8.400H16V16l-8.500-1.200z" />
        </svg>
      </div>
      <div className="flex w-72 items-center overflow-hidden border border-[#bfc2c4] bg-[#f2f2f2] text-[#303030]">
        <svg viewBox="0 0 17 17" className="ml-[11px] size-[17px]" fill="none" stroke="#111" strokeWidth="1.300">
          <circle cx="10.500" cy="6.500" r="5.500" />
          <path d="M6.500 10.500.800 16.200" />
        </svg>
        <span className="mt-[2px] ml-[11px] text-[13.900px]">Type here to search</span>
        <span className="ml-auto">
          <PolarBear />
        </span>
      </div>
      <div className="ml-[3px] flex">
        {apps.map((a, i) => (
          <div key={i} className={`flex flex-col items-center ${a.width} ${a.active ? "border-r-[3px] border-[#3c4a50] bg-[#4e5b64]" : ""}`}>
            <span className={`mt-[7px] ${a.active ? "pl-[3px]" : ""}`}>{a.icon}</span>
            {a.bar && (
              <span className={`mt-auto flex h-[2px] shrink-0 bg-[#5fb55f] ${a.bar}`}>
                {a.stacked && <span className="ml-auto w-2 bg-[#44804a]" />}
              </span>
            )}
          </div>
        ))}
      </div>
      <div className="ml-auto flex items-center">
        <span className="size-5 rounded-full bg-gradient-to-br from-[#f6b931] to-[#f07a17]" />
        <span className="mt-[1px] ml-[10px] w-[30px] text-[13.400px]">38°C</span>
        <ChevronUp className="ml-[15px] size-4" strokeWidth={1.700} />
        <svg viewBox="0 0 14 16" className="ml-[10px] h-4 w-[14px]" fill="none" stroke="#fff" strokeWidth="1.200">
          <path d="M3 2.500C5 .8 8 .8 10 2.500M3 13.500c2 1.700 5 1.700 7 0M2 5h7.500v6H2zM9.500 7.300 12 5.800v4.400L9.500 8.700" />
        </svg>
        <svg viewBox="0 0 17 12" className="ml-[8px] h-3 w-[17px]">
          <path d="M3 9a3 3 0 0 1 0-5 4.500 4.500 0 0 1 8-1.500A4 4 0 0 1 15 6z" fill="#a9b1b6" />
          <path d="M3 11.500a2.700 2.700 0 0 1 .3-5.400c1.500-2 4.500-2 6 0 1-.6 2.600-.2 3.200 1 3-.6 4.700 3 2.500 4.400z" fill="#fff" />
        </svg>
        <svg viewBox="0 0 17 12" className="ml-[7px] h-3 w-[17px]" fill="none" stroke="#fff" strokeWidth="1">
          <path d="M1.500 0v2.500M4.500 0v2.500M.5 2.500h5v2.500h-5zM3 5v5.500h3M6.500 2.500h8.500v8H6M16.500 4.500v4M8 4.500l4 4M12 4.500l-4 4" />
        </svg>
        <svg viewBox="0 0 13 13" className="ml-[10px] size-[13px]" fill="none" stroke="#fff" strokeWidth="1.100">
          <path d="M1 12C1 6 6 1 12 1M4 12c0-4.500 3.500-8 8-8M7 12c0-3 2-5 5-5" />
          <circle cx="11" cy="11.200" r="1.300" fill="#fff" stroke="none" />
        </svg>
        <svg viewBox="0 0 17 14" className="ml-[8px] h-[14px] w-[17px]" fill="none" stroke="#fff" strokeWidth="1.100">
          <path d="M1 5h2.500L7 1.500v11L3.500 9H1zM9 5c1 1.200 1 2.800 0 4M11.500 3c2 2.500 2 5.500 0 8M14 1.200c3 3.600 3 8 0 11.600" />
        </svg>
        <div className="mt-[-1px] ml-[9px] w-[52px] text-center text-[11.050px] leading-[18px] whitespace-nowrap">
          <div className="text-[11.400px]">4:10 PM</div>
          <div>2/27/2023</div>
        </div>
        <svg viewBox="0 0 17 17" className="ml-[18px] size-[17px]" fill="none" stroke="#fff" strokeWidth="1.300">
          <path d="M1 2h15v11h-5l-2.500 2.500L6 13H1z" />
        </svg>
        <span className="mr-1 ml-[19px] h-10 w-px bg-[#75818a]" />
      </div>
    </footer>
  );
}

export default function App() {
  return (
    <div className="flex h-[768px] w-[1366px] flex-col overflow-hidden bg-white font-['Noto_Sans',sans-serif]">
      <TabStrip />
      <Toolbar />
      <div className="flex h-[662px] shrink-0 border-t border-[#d3d7da]">
        <Sidebar />
        <main className="flex min-w-0 flex-1 flex-col">
          <nav className="flex h-9 shrink-0 items-center border-b border-[#dcdee2] pl-[44.500px] text-[9.150px] font-medium text-black">
            <span>strange-orieja</span>
            <span className="w-[21.500px] text-center font-normal text-[#656a76]">/</span>
            <span className="text-[9.050px]">Projects &amp; workspaces</span>
            <span className="w-[22.500px] text-center font-normal text-[#656a76]">/</span>
            <span>DEV</span>
            <span className="w-[21px] text-center font-normal text-[#656a76]">/</span>
            <span className="mt-[1px] text-[9.400px] font-normal text-[#656a76]">Overview</span>
          </nav>
          <PageHeader />
          <div className="flex min-h-0 flex-1 pl-[42px]">
            <MainColumn />
            <RightColumn />
          </div>
        </main>
        <Scrollbar />
      </div>
      <Taskbar />
    </div>
  );
}
